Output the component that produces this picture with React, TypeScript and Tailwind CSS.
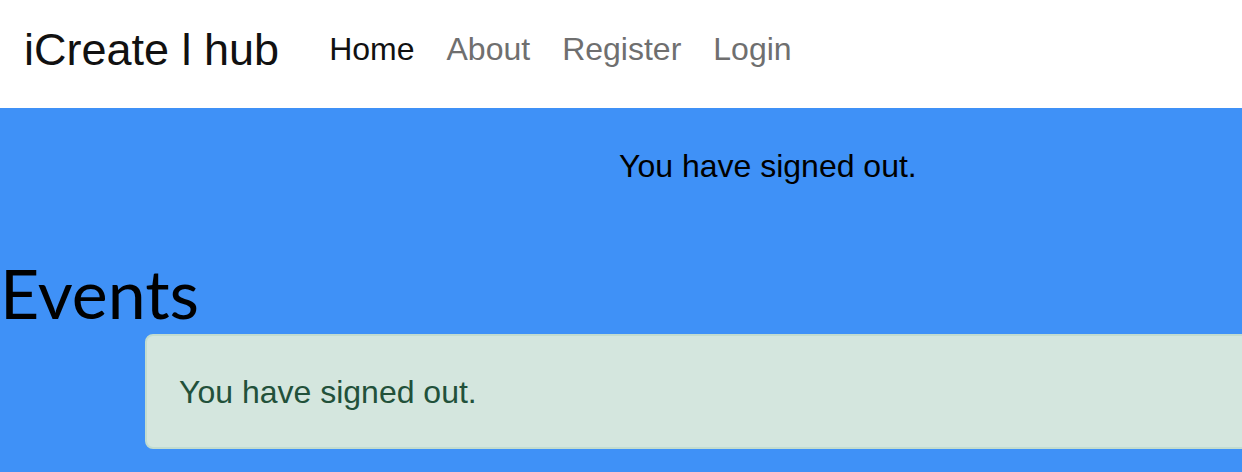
import React from 'react';

const links = [
  { label: 'Home', active: true },
  { label: 'About', active: false },
  { label: 'Register', active: false },
  { label: 'Login', active: false },
];

const App = () => {
  return (
    <div className="w-[1242px] h-[472px] overflow-hidden bg-[#3f91f7] font-['Liberation_Sans',Arial,sans-serif]">
      {/* Navbar */}
      <header className="h-[108px] bg-white flex items-center px-6 pb-[10px]">
        <a href="#" className="text-[45px] text-[#111] mr-[34px] leading-none">
          iCreate l hub
        </a>
        <nav className="flex items-center">
          {links.map((l) => (
            <a
              key={l.label}
              href="#"
              className={`px-4 text-[32px] leading-none ${l.active ? 'text-[#111]' : 'text-[#6f6f6f]'}`}
            >
              {l.label}
            </a>
          ))}
        </nav>
      </header>

      {/* Flash */}
      <div className="pt-[34px] pl-[619px]">
        <p className="text-[32px] leading-[48px] text-black">You have signed out.</p>
      </div>

      {/* Events */}
      <h1 className="mt-[69px] text-[68px] leading-[68px] text-black font-['Lato',sans-serif] font-normal">
        Events
      </h1>
      <div className="ml-[145px] mt-[7px] w-[1200px] h-[115px] bg-[#d4e6de] border-2 border-[#c2dccf] rounded-lg flex items-center px-8">
        <p className="text-[32px] text-[#22513a] leading-[48px]">You have signed out.</p>
      </div>
    </div>
  );
};

export default App;
